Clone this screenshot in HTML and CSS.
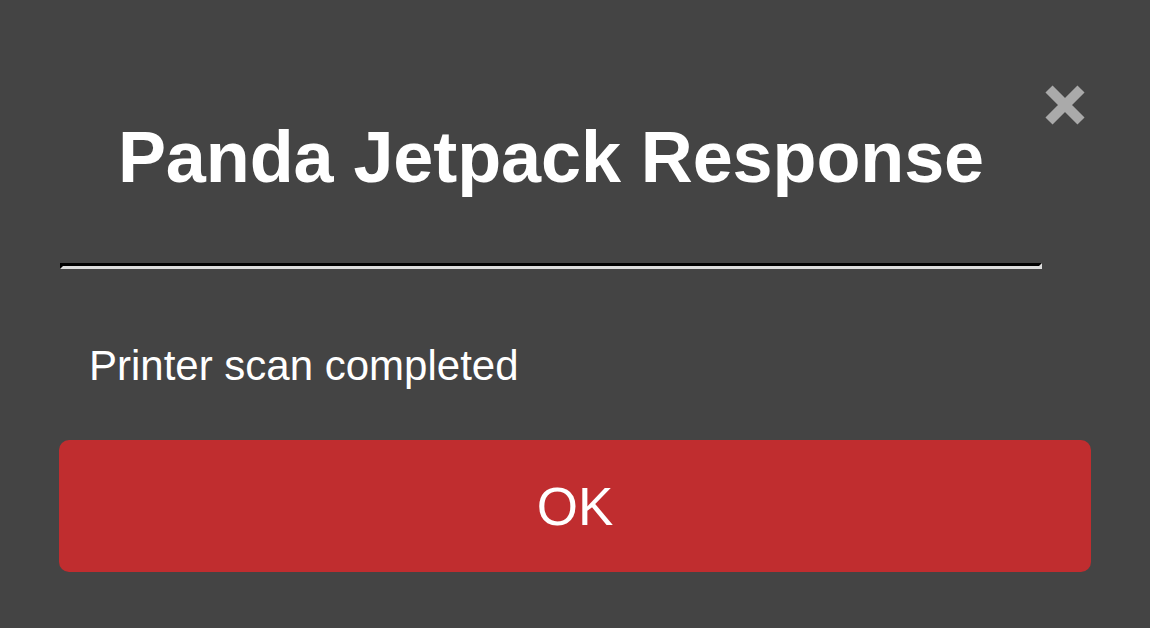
FILE: index.html
```html
<!DOCTYPE html>
<html>
<head>
<meta charset="utf-8">
<link rel="stylesheet" href="styles.css">
</head>
<body>
<div class="dialog">
  <button class="close" aria-label="Close">
    <svg width="40" height="40" viewBox="0 0 40 40"><path d="M4 4 L36 36 M36 4 L4 36" stroke="#aaaaaa" stroke-width="10" stroke-linecap="butt" fill="none"/></svg>
  </button>
  <div class="header">
    <h1 class="title">Panda Jetpack Response</h1>
    <hr class="divider">
  </div>
  <p class="message">Printer scan completed</p>
  <button class="ok">OK</button>
</div>
</body>
</html>
```

FILE: styles.css
```css
html, body {
  margin: 0;
  padding: 0;
  background: #444444;
  height: 100%;
}
body {
  font-family: "Liberation Sans", Arial, sans-serif;
  color: #ffffff;
}
.dialog {
  position: relative;
  padding: 121px 59px 0 59px;
}
.close {
  position: absolute;
  top: 85px;
  left: 1045px;
  width: 40px;
  height: 40px;
  padding: 0;
  border: 0;
  background: none;
  display: block;
}
.close svg { display: block; }
.header {
  width: 982px;
  margin-left: 1px;
}
.title {
  margin: 0;
  font-size: 72px;
  line-height: 72px;
  font-weight: bold;
  text-align: center;
  letter-spacing: -0.1px;
}
.divider {
  margin: 70px 0 0 0;
  height: 0;
  border-style: solid;
  border-width: 3px;
  border-top-color: #000000;
  border-left-color: #000000;
  border-bottom-color: #dcdcdc;
  border-right-color: #dcdcdc;
}
.message {
  margin: 75px 0 0 30px;
  font-size: 42px;
  line-height: 44px;
}
.ok {
  display: block;
  width: 1032px;
  height: 132px;
  margin-top: 52px;
  border: 0;
  border-radius: 10px;
  background: #c02d2f;
  color: #ffffff;
  font-family: "Liberation Sans", Arial, sans-serif;
  font-size: 53px;
  padding: 0;
}
```
